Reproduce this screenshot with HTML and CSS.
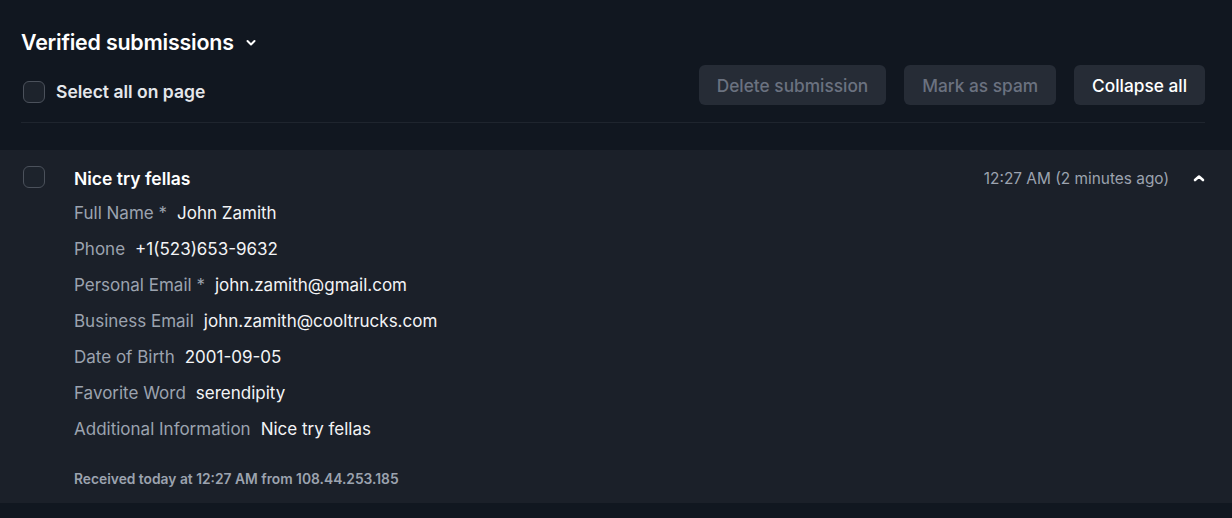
FILE: index.html
```html
<!DOCTYPE html>
<html lang="en">
<head>
  <meta charset="UTF-8" />
  <meta name="viewport" content="width=device-width, initial-scale=1.0"/>
  <title>Verified submissions</title>
  <link rel="stylesheet" href="styles.css">
</head>
<body>
  <div class="header">
    <div class="header-left">
      <h2 class="title">Verified submissions
        <svg class="title-chevron" width="10" height="8" viewBox="0 0 10 8"><polyline points="1.5,2 5,5.5 8.5,2" fill="none" stroke="#fff" stroke-width="2" stroke-linecap="round" stroke-linejoin="round"/></svg>
      </h2>
      <label class="select-all">
        <span class="checkbox"></span>
        Select all on page
      </label>
    </div>
    <div class="actions">
      <button class="btn disabled">Delete submission</button>
      <button class="btn disabled">Mark as spam</button>
      <button class="btn">Collapse all</button>
    </div>
  </div>
  <div class="divider"></div>

  <div class="submission">
    <span class="checkbox"></span>
    <div class="submission-body">
      <div class="submission-head">
        <span class="submission-title">Nice try fellas</span>
        <span class="submission-time">12:27 AM (2 minutes ago)</span>
        <svg class="collapse-chevron" width="12" height="8" viewBox="0 0 12 8"><polyline points="2,6 6,2.5 10,6" fill="none" stroke="#fff" stroke-width="2.6" stroke-linecap="round" stroke-linejoin="round"/></svg>
      </div>
      <ul class="fields">
        <li><span class="label">Full Name *</span><span class="value">John Zamith</span></li>
        <li><span class="label">Phone</span><span class="value">+1(523)653-9632</span></li>
        <li><span class="label">Personal Email *</span><span class="value">john.zamith@gmail.com</span></li>
        <li><span class="label">Business Email</span><span class="value">john.zamith@cooltrucks.com</span></li>
        <li><span class="label">Date of Birth</span><span class="value">2001-09-05</span></li>
        <li><span class="label">Favorite Word</span><span class="value">serendipity</span></li>
        <li><span class="label">Additional Information</span><span class="value">Nice try fellas</span></li>
      </ul>
      <p class="received">Received today at 12:27 AM from 108.44.253.185</p>
    </div>
  </div>
</body>
</html>
```

FILE: styles.css
```css
* {
  box-sizing: border-box;
  margin: 0;
  padding: 0;
}
body {
  font-family: Inter, 'Noto Sans', sans-serif;
  background: #111720;
  color: #f3f4f6;
  height: 518px;
  overflow: hidden;
}
.header {
  display: flex;
  justify-content: space-between;
  align-items: flex-end;
  padding: 28px 27px 0 21px;
}
.title {
  font-size: 21.4px;
  line-height: 28px;
  font-weight: 600;
  color: #fff;
  display: flex;
  align-items: center;
  gap: 12px;
  letter-spacing: -0.2px;
}
.title-chevron {
  margin-top: 2px;
}
.select-all {
  display: flex;
  align-items: center;
  gap: 11px;
  margin-top: 25px;
  margin-bottom: 2px;
  font-size: 17.5px;
  line-height: 22px;
  font-weight: 600;
  color: #e5e7eb;
  padding-left: 2px;
}
.checkbox {
  display: inline-block;
  width: 22px;
  height: 22px;
  border: 1.5px solid #4b515b;
  border-radius: 6px;
  background: #1d232c;
  flex-shrink: 0;
}
.actions {
  display: flex;
  gap: 18px;
}
.btn {
  font-family: inherit;
  font-size: 17.3px;
  font-weight: 500;
  height: 40px;
  padding: 0 18px;
  border: none;
  border-radius: 6px;
  background: #262c36;
  color: #fff;
}
.btn.disabled {
  color: #6b7280;
}
.divider {
  height: 1px;
  background: #1f252e;
  margin: 17px 27px 0 21px;
}
.submission {
  display: flex;
  gap: 29px;
  margin-top: 27px;
  background: #1b2029;
  padding: 16px 27px 16px 23px;
}
.submission-body {
  flex: 1;
}
.submission-head {
  display: flex;
  align-items: center;
  height: 24px;
}
.submission-title {
  flex: 1;
  font-size: 17.5px;
  font-weight: 600;
  color: #fff;
}
.submission-time {
  font-size: 15.4px;
  color: #9ca3af;
}
.collapse-chevron {
  margin-left: 24px;
}
.fields {
  list-style: none;
  margin-top: 5px;
}
.fields li {
  display: flex;
  gap: 10px;
  height: 36px;
  align-items: center;
  font-size: 17px;
}
.label {
  color: #9ca3af;
}
.value {
  color: #f3f4f6;
}
.received {
  margin-top: 24px;
  font-size: 13.8px;
  line-height: 16px;
  font-weight: 600;
  color: #9ca3af;
}
```
